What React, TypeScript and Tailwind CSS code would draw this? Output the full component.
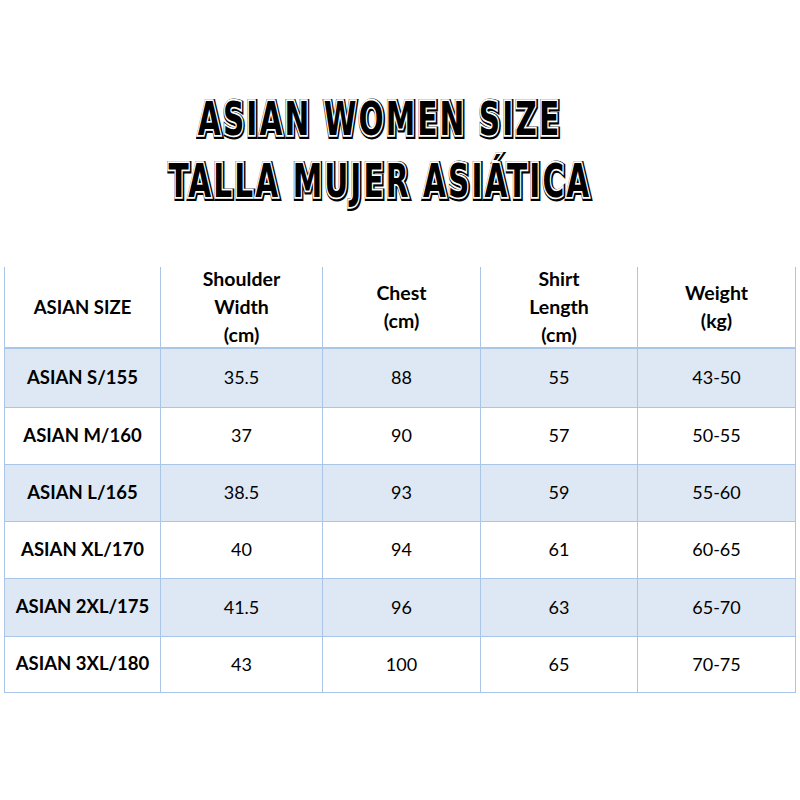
const rows = [
  ["ASIAN S/155", "35.5", "88", "55", "43-50"],
  ["ASIAN M/160", "37", "90", "57", "50-55"],
  ["ASIAN L/165", "38.5", "93", "59", "55-60"],
  ["ASIAN XL/170", "40", "94", "61", "60-65"],
  ["ASIAN 2XL/175", "41.5", "96", "63", "65-70"],
  ["ASIAN 3XL/180", "43", "100", "65", "70-75"],
]

const heights = ["h-[59px]", "h-[57px]", "h-[57px]", "h-[57px]", "h-[58px]", "h-[56px]"]
const widths = ["w-[156px]", "w-[162px]", "w-[158px]", "w-[157px]", "w-[158px]"]

function TitleLine({ text }: { text: string }) {
  // three stacked copies: outer black rim, white inline, solid black fill
  const base =
    "relative col-start-1 row-start-1 whitespace-nowrap font-bold text-[47px] leading-[62px] tracking-[3px]"
  return (
    <div className="grid origin-center scale-x-[0.7]" style={{ fontFamily: '"DejaVu Sans Condensed", "DejaVu Sans", sans-serif' }}>
      <span className={`${base} text-black [-webkit-text-stroke:6px_black] translate-x-[1px] translate-y-[1px]`}>{text}</span>
      <span className={`${base} text-black [-webkit-text-stroke:3.5px_white]`}>{text}</span>
      <span className={`${base} text-black`}>{text}</span>
    </div>
  )
}

export default function App() {
  return (
    <div className="w-[800px] h-[800px] bg-white overflow-hidden" style={{ fontFamily: 'Lato, "Noto Sans", sans-serif' }}>
      <div className="flex flex-col items-center pt-[88px] pr-[40px]">
        <TitleLine text="ASIAN WOMEN SIZE" />
        <TitleLine text="TALLA MUJER ASIÁTICA" />
      </div>

      <table className="ml-[4px] mt-[55px] border-collapse text-black">
        <thead>
          <tr>
            {[
              ["ASIAN SIZE"],
              ["Shoulder", "Width", "(cm)"],
              ["Chest", "(cm)"],
              ["Shirt", "Length", "(cm)"],
              ["Weight", "(kg)"],
            ].map((lines, i) => (
              <th
                key={i}
                className={`${widths[i]} border-x border-b-2 border-[#a9c5e8] font-bold ${i === 0 ? "text-[18.5px]" : "text-[19.5px]"} leading-[28px] text-center align-middle p-0`}
              >
                <div className="h-[80px] flex flex-col justify-center">
                  {lines.map((l) => (
                    <div key={l}>{l}</div>
                  ))}
                </div>
              </th>
            ))}
          </tr>
        </thead>
        <tbody>
          {rows.map((r, ri) => (
            <tr key={r[0]} className={`${heights[ri]} ${ri % 2 === 0 ? "bg-[#dee8f4]" : "bg-white"}`}>
              {r.map((c, ci) => (
                <td
                  key={ci}
                  className={`border border-[#a9c5e8] text-center align-middle p-0 ${ci === 0 ? "font-bold text-[18.5px]" : "font-normal text-[18px]"}`}
                >
                  {c}
                </td>
              ))}
            </tr>
          ))}
        </tbody>
      </table>
    </div>
  )
}
